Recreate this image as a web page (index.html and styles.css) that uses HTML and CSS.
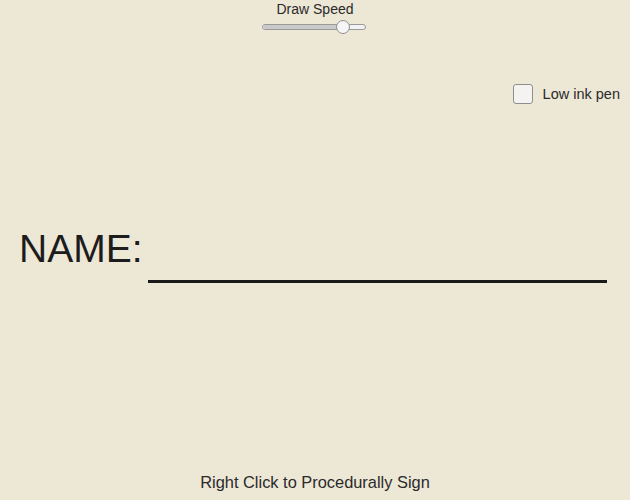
FILE: index.html
```html
<!DOCTYPE html>
<html>
<head>
<meta charset="utf-8">
<link rel="stylesheet" href="styles.css">
</head>
<body>
<div class="page">
  <div class="speed">
    <div class="speed-label">Draw Speed</div>
    <div class="slider">
      <div class="track"><div class="fill"></div></div>
      <div class="thumb"></div>
    </div>
  </div>
  <div class="options">
    <label class="opt"><span class="box"></span><span class="opt-text">Low ink pen</span></label>
  </div>
  <div class="name-row">
    <div class="name-label">NAME:</div>
    <div class="name-line"></div>
  </div>
  <div class="hint">Right Click to Procedurally Sign</div>
</div>
</body>
</html>
```
FILE: styles.css
```css
html, body {
  margin: 0;
  padding: 0;
  background: #ede7d6;
}
.page {
  width: 630px;
  height: 500px;
  display: flex;
  flex-direction: column;
  font-family: "Liberation Sans", Arial, sans-serif;
  color: #222;
  box-sizing: border-box;
}
.speed {
  display: flex;
  flex-direction: column;
  align-items: center;
  padding-top: 1px;
}
.speed-label {
  font-size: 14px;
  line-height: 16px;
  color: #2a2a2a;
}
.slider {
  position: relative;
  width: 104px;
  height: 14px;
  margin-top: 3px;
  left: -1px;
}
.track {
  position: absolute;
  left: 0;
  right: 0;
  top: 4px;
  height: 4px;
  border: 1px solid #9a9a9a;
  border-radius: 4px;
  background: #f2f2f2;
  overflow: hidden;
}
.fill {
  width: 78%;
  height: 100%;
  background: #c9c9c9;
}
.thumb {
  position: absolute;
  left: 74px;
  top: 0;
  width: 12px;
  height: 12px;
  border-radius: 50%;
  background: #f6f6f6;
  border: 1px solid #8f8f8f;
}
.options {
  display: flex;
  justify-content: flex-end;
  padding-right: 10px;
  margin-top: 50px;
}
.opt {
  display: flex;
  align-items: center;
  gap: 10px;
}
.box {
  width: 18px;
  height: 18px;
  border: 1px solid #8e8e8e;
  border-radius: 3px;
  background: #f4f3f1;
}
.opt-text {
  font-size: 14.5px;
  color: #2a2a2a;
}
.name-row {
  display: flex;
  align-items: flex-end;
  margin-top: 125px;
  padding-left: 19px;
}
.name-label {
  font-size: 39px;
  line-height: 40px;
  color: #1c1c1c;
}
.name-line {
  width: 459px;
  height: 3px;
  background: #1a1a1a;
  margin-left: 5px;
  margin-bottom: -14px;
}
.hint {
  margin-top: auto;
  margin-bottom: 8px;
  text-align: center;
  font-size: 16.4px;
  color: #2a2a2a;
}
```
